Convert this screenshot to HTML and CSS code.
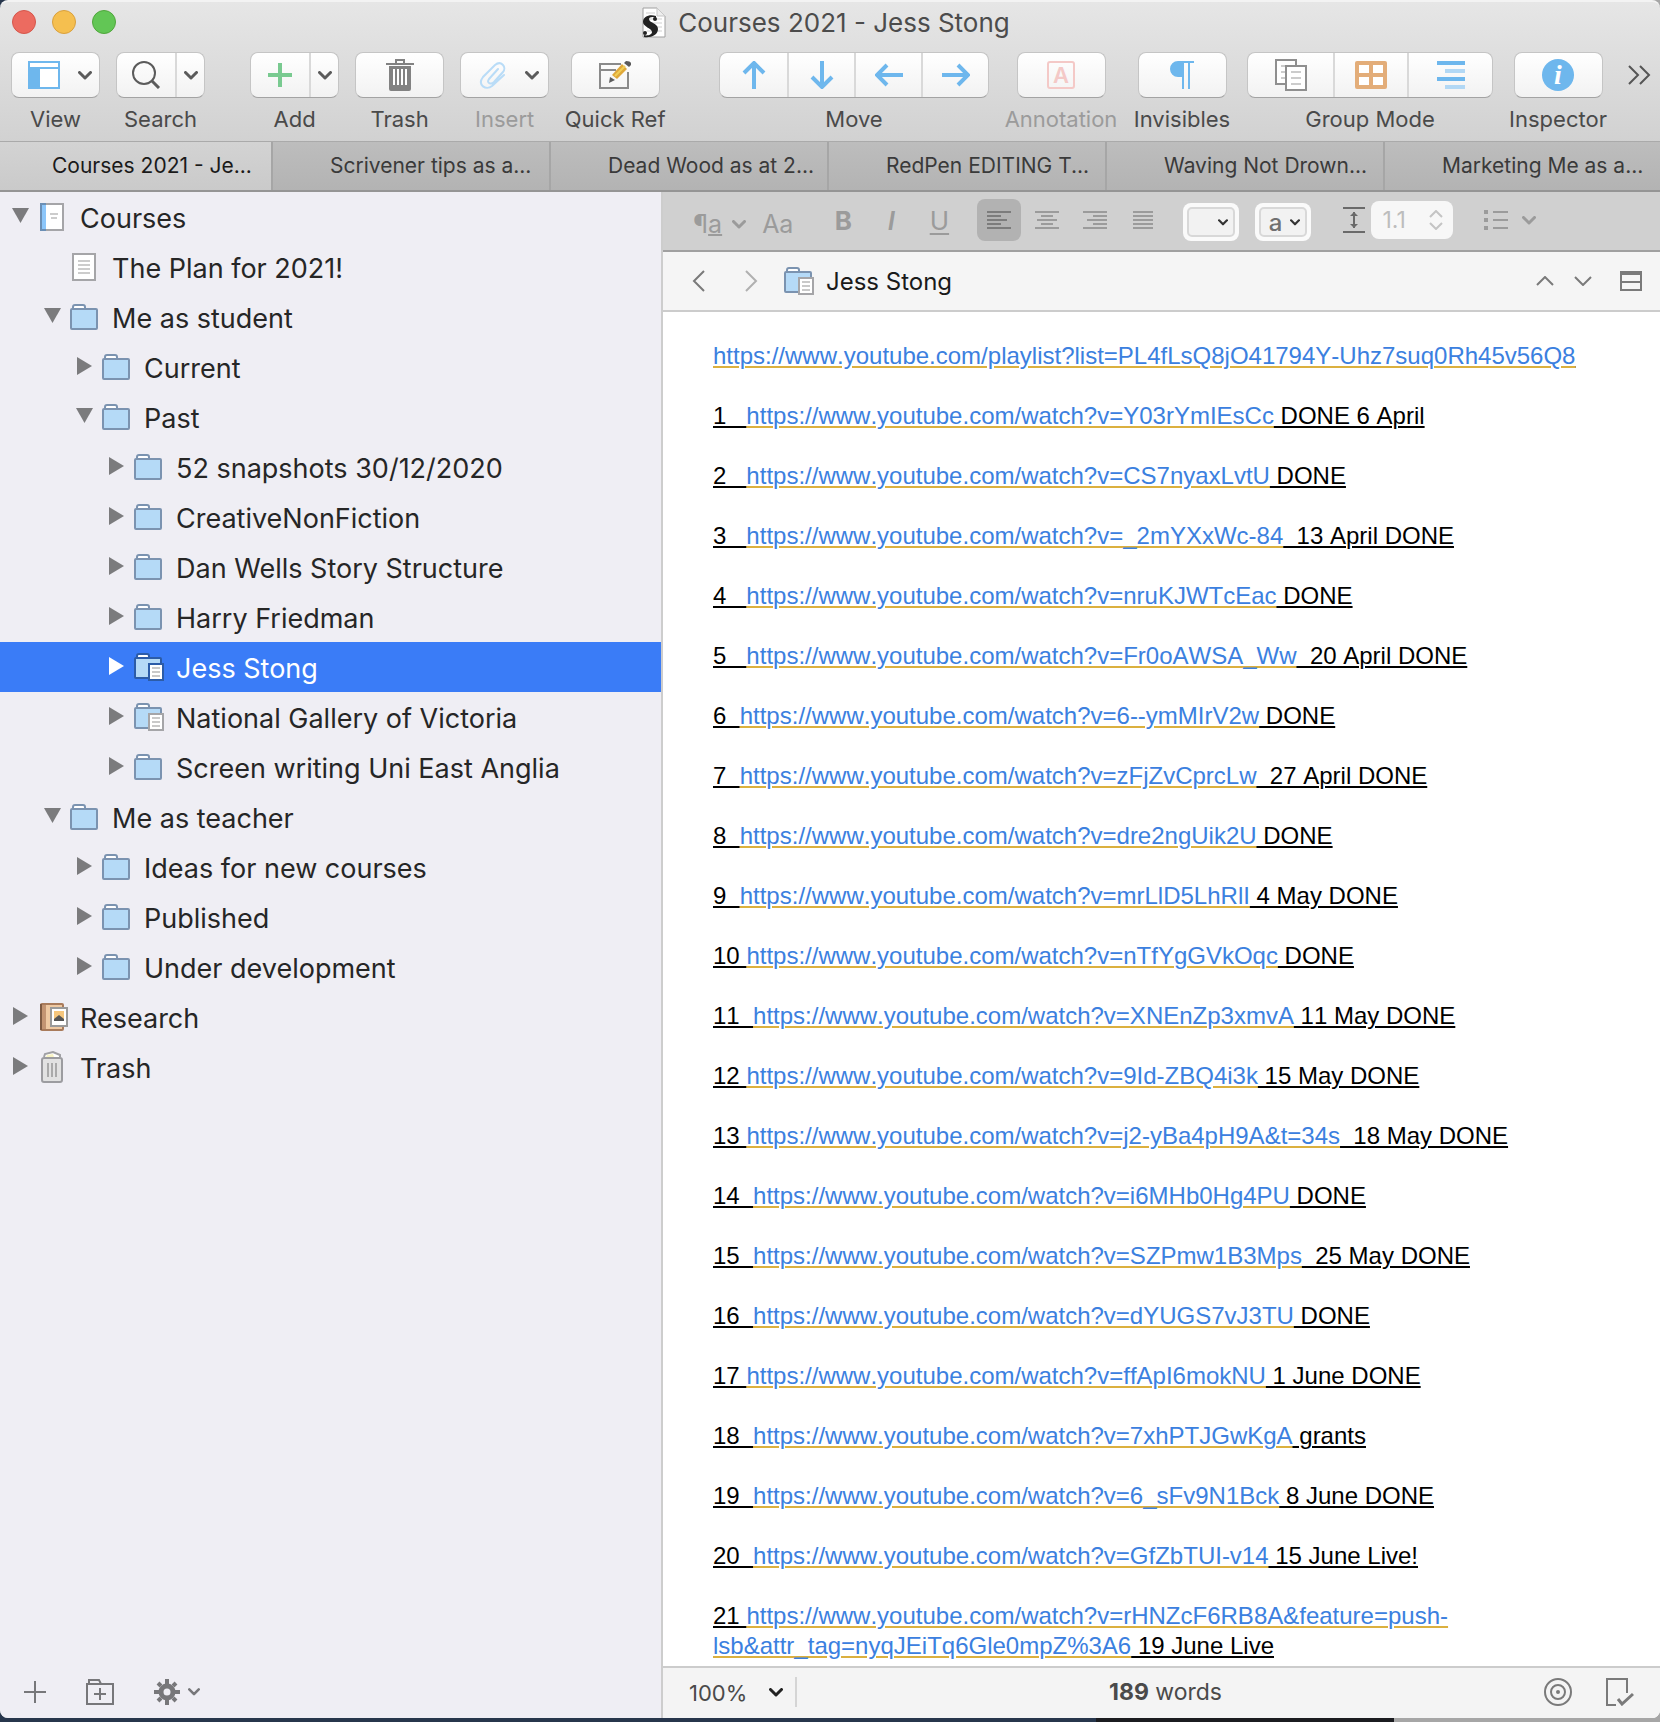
FILE: index.html
```html
<!DOCTYPE html>
<html lang="en">
<head>
  <meta charset="UTF-8" />
  <meta name="viewport" content="width=device-width, initial-scale=1.0" />
  <title>Courses 2021 - Jess Stong</title>
  <link rel="stylesheet" href="styles.css">
</head>
<body>

  <!-- shared icons -->
  <svg class="sprite" aria-hidden="true">
    <symbol id="chevron" viewBox="0 0 14 9"><path d="M1.5 1.5L7 7L12.5 1.5" fill="none" stroke="currentColor" stroke-width="3" stroke-linecap="round" stroke-linejoin="round"/></symbol>
    <symbol id="tri-down" viewBox="0 0 18 18"><path d="M0 1H17L8.500 16Z" fill="currentColor"/></symbol>
    <symbol id="tri-right" viewBox="0 0 18 18"><path d="M1 0V18L16 9Z" fill="currentColor"/></symbol>
    <symbol id="folder" viewBox="0 0 28 26">
      <path d="M3 5V3Q3 1 5 1H13Q15 1 15 3V5" fill="#fff" stroke="var(--folder-line)" stroke-width="2"/>
      <rect x="1" y="5" width="26" height="20" rx="1" fill="#b5daf7" stroke="var(--folder-line)" stroke-width="2"/>
    </symbol>
    <symbol id="folder-doc" viewBox="0 0 30 28">
      <path d="M3 5V3Q3 1 5 1H13Q15 1 15 3V5" fill="#fff" stroke="var(--folder-line)" stroke-width="2"/>
      <rect x="1" y="5" width="26" height="20" rx="1" fill="#b5daf7" stroke="var(--folder-line)" stroke-width="2"/>
      <rect x="15" y="11" width="14" height="16" fill="#fff" stroke="var(--doc-line)" stroke-width="2"/>
      <path d="M18 15H26M18 19H26M18 23H26" stroke="#c9c9c9" stroke-width="2"/>
    </symbol>
  </svg>

  <div class="window">
    <header class="titlebar">
      <div class="lights">
        <button class="light red" aria-label="Close"></button>
        <button class="light yellow" aria-label="Minimise"></button>
        <button class="light green" aria-label="Zoom"></button>
      </div>
      <h1>
        <svg width="24" height="31" viewBox="0 0 24 31">
          <path d="M1 1H15L23 9V30H1Z" fill="#fff" stroke="#a0a0a0" stroke-width="1"/>
          <path d="M15 1V9H23" fill="#eee" stroke="#c5c5c5"/>
          <path d="M4 6H13M5 12H20M5 16H20M5 20H20M5 24H20" stroke="#cfcfcf"/>
          <path d="M14 9C8 7 1 9 1 15C1 20 10 21 10 25C10 28 5 29 2 28V30C9 31 16 28 16 22C16 16 7 16 7 12C7 10 11 9 14 11Z" fill="#222"/>
          <circle cx="13" cy="12" r="2" fill="#222"/><circle cx="3" cy="26" r="2" fill="#222"/>
        </svg>
        Courses 2021 - Jess Stong
      </h1>
    </header>

    <div class="toolbar">
      <div class="tool">
        <div class="group">
          <button class="split" aria-label="View">
            <svg width="32" height="28"><path d="M0 0H32V28H0Z" fill="#6eb7ed"/><path d="M2 2H30V6H2ZM12 8H30V26H12Z" fill="#fff"/></svg>
            <svg class="chev"><use href="#chevron"/></svg>
          </button>
        </div>
        <span>View</span>
      </div>
      <div class="tool">
        <div class="group">
          <button class="seg-58" aria-label="Search"><svg width="30" height="28" fill="none" stroke="#5b5b5b"><circle cx="13" cy="12" r="11" stroke-width="2"/><path d="M21 20L28 27" stroke-width="3"/></svg></button>
          <button class="seg-29" aria-label="Search options"><svg class="chev"><use href="#chevron"/></svg></button>
        </div>
        <span>Search</span>
      </div>
      <div class="spacer"></div>
      <div class="tool">
        <div class="group">
          <button class="seg-58" aria-label="Add"><svg width="24" height="24"><path d="M12 0V24M0 12H24" stroke="#79ca90" stroke-width="4"/></svg></button>
          <button class="seg-29" aria-label="Add options"><svg class="chev"><use href="#chevron"/></svg></button>
        </div>
        <span>Add</span>
      </div>
      <div class="tool">
        <div class="group">
          <button class="seg-87" aria-label="Trash"><svg width="28" height="32"><path d="M10 5V1H18V5" fill="none" stroke="#828282" stroke-width="2"/><path d="M0 4H28V6H0ZM3 7H25V30Q25 32 23 32H5Q3 32 3 30Z" fill="#828282"/><path d="M8 10V26M12 10V26M16 10V26M20 10V26" stroke="#fff" stroke-width="2"/></svg></button>
        </div>
        <span>Trash</span>
      </div>
      <div class="tool disabled">
        <div class="group">
          <button class="split" aria-label="Insert">
            <svg width="28" height="28" viewBox="0 0 28 28" fill="none" stroke="#b9dcf7" stroke-width="2" stroke-linecap="round"><path d="M19 8L10 18C7 22 12 24 15 21L24 11C28 6 22 -1 16 4L4 16C-2 24 7 30 13 25L25 14"/></svg>
            <svg class="chev"><use href="#chevron"/></svg>
          </button>
        </div>
        <span>Insert</span>
      </div>
      <div class="tool wide-100">
        <div class="group">
          <button class="seg-87" aria-label="Quick Ref"><svg width="32" height="28" viewBox="0 0 32 28"><path d="M22 3H1V27H29V11M1 9H17" fill="none" stroke="#8a8a8a" stroke-width="2"/><path d="M11 16L10 22L16 19Z" fill="#5b5b5b"/><path d="M13 14L23 3L28 8L18 18Z" fill="#e0a83a"/><path d="M16 15L26 5" stroke="#f0ce55" stroke-width="2"/><path d="M25 2L27 0Q33 0 32 4L30 6Z" fill="#5b5b5b"/></svg></button>
        </div>
        <span>Quick Ref</span>
      </div>
      <div class="spacer double"></div>
      <div class="tool move">
        <div class="group">
          <button class="seg-67" aria-label="Move up"><svg width="28" height="28"><path d="M14 28V2M4 12L14 2L24 12"/></svg></button>
          <button class="seg-67" aria-label="Move down"><svg width="28" height="28"><path d="M14 0V26M4 16L14 26L24 16"/></svg></button>
          <button class="seg-67" aria-label="Move left"><svg width="28" height="28"><path d="M28 14H2M12 4L2 14L12 24"/></svg></button>
          <button class="seg-67" aria-label="Move right"><svg width="28" height="28"><path d="M0 14H26M16 4L26 14L16 24"/></svg></button>
        </div>
        <span>Move</span>
      </div>
      <div class="tool disabled wide-112">
        <div class="group">
          <button class="seg-87" aria-label="Annotation"><svg width="28" height="28"><rect x="1" y="1" width="26" height="26" rx="2" fill="none" stroke="#f4c9c7" stroke-width="2"/><text x="14" y="22" class="glyph-a">A</text></svg></button>
        </div>
        <span>Annotation</span>
      </div>
      <div class="tool wide-98">
        <div class="group">
          <button class="seg-87" aria-label="Invisibles"><svg width="24" height="28"><path d="M24 0H8A8 8 0 0 0 8 16H12V28H14V2H18V28H20V2H24Z" fill="#6eb7ed"/></svg></button>
        </div>
        <span>Invisibles</span>
      </div>
      <div class="tool">
        <div class="group">
          <button class="seg-85" aria-label="Scrivenings"><svg width="32" height="32" stroke-width="2"><path d="M1 1H21V25H1Z" fill="#fff" stroke="#8f8f8f"/><path d="M6 7H16M6 13H16M6 19H16" stroke="#ccc"/><path d="M11 7H31V31H11Z" fill="#fff" stroke="#8f8f8f"/><path d="M16 13H26M16 19H26M16 25H26" stroke="#ccc"/></svg></button>
          <button class="seg-74" aria-label="Corkboard"><svg width="32" height="28"><rect width="32" height="28" rx="2" fill="#e3ad79"/><path d="M4 4H14V12H4ZM18 4H28V12H18ZM4 16H14V24H4ZM18 16H28V24H18Z" fill="#fff"/></svg></button>
          <button class="seg-85" aria-label="Outliner"><svg width="28" height="28" stroke-width="4"><path d="M0 2H28M0 18H28" stroke="#6eb7ed"/><path d="M8 10H28M8 26H28" stroke="#b2d8f5"/></svg></button>
        </div>
        <span>Group Mode</span>
      </div>
      <div class="tool wide-98">
        <div class="group">
          <button class="seg-87" aria-label="Inspector"><svg width="32" height="32"><circle cx="16" cy="16" r="16" fill="#6eb7ed"/><text x="16" y="25" class="glyph-i">i</text></svg></button>
        </div>
        <span>Inspector</span>
      </div>
      <button class="more" aria-label="More tools"><svg width="24" height="20" fill="none" stroke="#555" stroke-width="2"><path d="M2 1L11 10L2 19M13 1L22 10L13 19"/></svg></button>
    </div>

    <nav class="tabs">
      <a href="#" class="active">Courses 2021 - Je...</a>
      <a href="#">Scrivener tips as a...</a>
      <a href="#">Dead Wood as at 2...</a>
      <a href="#">RedPen EDITING T...</a>
      <a href="#">Waving Not Drown...</a>
      <a href="#">Marketing Me as a...</a>
    </nav>

    <main>
      <aside class="binder">
        <ul>
          <li><button class="toggle" aria-label="Collapse"><svg><use href="#tri-down"/></svg></button>
            <span class="icon"><svg width="24" height="28"><path d="M1 1H23V27H1Z" fill="#fff" stroke="#a5a5a8" stroke-width="2"/><path d="M0 0H6V28H0Z" fill="#6b8fb5"/><path d="M2 2H6V26H2Z" fill="#8cc6fa"/><path d="M10 11H18M11 15H17" stroke="#ccc" stroke-width="2"/></svg></span><a href="#">Courses</a></li>
          <li class="level-1"><span class="toggle"></span>
            <span class="icon"><svg width="24" height="28"><path d="M1 1H23V27H1Z" fill="#fff" stroke="#a5a5a8" stroke-width="2"/><path d="M6 8H18M6 12H18M6 16H18M6 20H18" stroke="#ccc" stroke-width="2"/></svg></span><a href="#">The Plan for 2021!</a></li>
          <li class="level-1"><button class="toggle" aria-label="Collapse"><svg><use href="#tri-down"/></svg></button><span class="icon"><svg class="folder"><use href="#folder"/></svg></span><a href="#">Me as student</a></li>
          <li class="level-2"><button class="toggle" aria-label="Expand"><svg><use href="#tri-right"/></svg></button><span class="icon"><svg class="folder"><use href="#folder"/></svg></span><a href="#">Current</a></li>
          <li class="level-2"><button class="toggle" aria-label="Collapse"><svg><use href="#tri-down"/></svg></button><span class="icon"><svg class="folder"><use href="#folder"/></svg></span><a href="#">Past</a></li>
          <li class="level-3"><button class="toggle" aria-label="Expand"><svg><use href="#tri-right"/></svg></button><span class="icon"><svg class="folder"><use href="#folder"/></svg></span><a href="#">52 snapshots 30/12/2020</a></li>
          <li class="level-3"><button class="toggle" aria-label="Expand"><svg><use href="#tri-right"/></svg></button><span class="icon"><svg class="folder"><use href="#folder"/></svg></span><a href="#">CreativeNonFiction</a></li>
          <li class="level-3"><button class="toggle" aria-label="Expand"><svg><use href="#tri-right"/></svg></button><span class="icon"><svg class="folder"><use href="#folder"/></svg></span><a href="#">Dan Wells Story Structure</a></li>
          <li class="level-3"><button class="toggle" aria-label="Expand"><svg><use href="#tri-right"/></svg></button><span class="icon"><svg class="folder"><use href="#folder"/></svg></span><a href="#">Harry Friedman</a></li>
          <li class="level-3 selected"><button class="toggle" aria-label="Expand"><svg><use href="#tri-right"/></svg></button><span class="icon"><svg class="folder-doc"><use href="#folder-doc"/></svg></span><a href="#">Jess Stong</a></li>
          <li class="level-3"><button class="toggle" aria-label="Expand"><svg><use href="#tri-right"/></svg></button><span class="icon"><svg class="folder-doc"><use href="#folder-doc"/></svg></span><a href="#">National Gallery of Victoria</a></li>
          <li class="level-3"><button class="toggle" aria-label="Expand"><svg><use href="#tri-right"/></svg></button><span class="icon"><svg class="folder"><use href="#folder"/></svg></span><a href="#">Screen writing Uni East Anglia</a></li>
          <li class="level-1"><button class="toggle" aria-label="Collapse"><svg><use href="#tri-down"/></svg></button><span class="icon"><svg class="folder"><use href="#folder"/></svg></span><a href="#">Me as teacher</a></li>
          <li class="level-2"><button class="toggle" aria-label="Expand"><svg><use href="#tri-right"/></svg></button><span class="icon"><svg class="folder"><use href="#folder"/></svg></span><a href="#">Ideas for new courses</a></li>
          <li class="level-2"><button class="toggle" aria-label="Expand"><svg><use href="#tri-right"/></svg></button><span class="icon"><svg class="folder"><use href="#folder"/></svg></span><a href="#">Published</a></li>
          <li class="level-2"><button class="toggle" aria-label="Expand"><svg><use href="#tri-right"/></svg></button><span class="icon"><svg class="folder"><use href="#folder"/></svg></span><a href="#">Under development</a></li>
          <li><button class="toggle" aria-label="Expand"><svg><use href="#tri-right"/></svg></button>
            <span class="icon"><svg class="book" width="28" height="28" viewBox="0 0 28 28"><rect x="3" y="1" width="22" height="26" rx="1" fill="#efc9a2" stroke="#a97b5b" stroke-width="2"/><path d="M4 2H8V26H4Z" fill="#c39472"/><path d="M3 1V27" stroke="#7e5a42" stroke-width="2"/><path d="M13 5H29V23H13Z" fill="#fff" stroke="#9a9a9a" stroke-width="2"/><path d="M16 8H26V18H16Z" fill="#f6c67c"/><path d="M16 18V16L21 12L26 16V18Z" fill="#555"/></svg></span><a href="#">Research</a></li>
          <li><button class="toggle" aria-label="Expand"><svg><use href="#tri-right"/></svg></button>
            <span class="icon"><svg width="22" height="32"><path d="M3 6L4 3L12 1L19 4V6" fill="#fff" stroke="#a0a0a4" stroke-width="2"/><path d="M5 6L6 4L12 3L13 6Z" fill="#f8f3c4"/><rect x="1" y="7" width="20" height="24" rx="2" fill="#e2e2e2" stroke="#9c9ca0" stroke-width="2"/><path d="M7 12V26M11 12V26M15 12V26" stroke="#aaa" stroke-width="2"/></svg></span><a href="#">Trash</a></li>
        </ul>
        <div class="binder-footer">
          <button aria-label="Add item"><svg width="22" height="22"><path d="M11 0V22M0 11H22" stroke="currentColor" stroke-width="2"/></svg></button>
          <button aria-label="Add folder"><svg width="28" height="26" fill="none" stroke="currentColor" stroke-width="2"><path d="M1 5H27V25H1ZM3 5V1H13L15 5M14 9V21M8 15H20"/></svg></button>
          <button class="gear" aria-label="Actions">
            <svg width="26" height="26" viewBox="-13 -13 26 26"><circle r="6" fill="none" stroke="currentColor" stroke-width="5"/><path d="M0 -13V-8M0 8V13M-13 0H-8M8 0H13M-9 -9L-6 -6M6 6L9 9M-9 9L-6 6M6 -6L9 -9" stroke="currentColor" stroke-width="4"/></svg>
            <svg width="12" height="8"><use href="#chevron"/></svg>
          </button>
        </div>
      </aside>

      <section class="editor">
        <div class="format-bar">
          <div class="styles">
            <button aria-label="Paragraph style"><span class="pilcrow">¶<u>a</u></span><svg class="chev"><use href="#chevron"/></svg></button>
            <button class="font">Aa</button>
          </div>
          <div class="cells">
            <button class="bold">B</button>
            <button class="italic">I</button>
            <button class="underline">U</button>
          </div>
          <div class="cells">
            <button class="on" aria-label="Align left"><svg width="24" height="18"><path d="M0 1H24M0 5H14M0 9H20M0 13H14M0 17H24"/></svg></button>
            <button aria-label="Align centre"><svg width="24" height="18"><path d="M0 1H24M6 5H18M2 9H22M6 13H18M0 17H24"/></svg></button>
            <button aria-label="Align right"><svg width="24" height="18"><path d="M0 1H24M10 5H24M4 9H24M10 13H24M0 17H24"/></svg></button>
            <button aria-label="Justify"><svg width="20" height="18"><path d="M0 1H20M0 5H20M0 9H20M0 13H20M0 17H20"/></svg></button>
          </div>
          <div class="colours">
            <button aria-label="Text colour"><span><svg width="10" height="7"><use href="#chevron"/></svg></span></button>
            <button aria-label="Highlight colour"><span>a<svg width="10" height="7"><use href="#chevron"/></svg></span></button>
          </div>
          <label class="spacing">
            <svg width="22" height="26" stroke="#6a6a6a" stroke-width="2"><path d="M0 1H22M0 25H22M11 5V21"/><path d="M7 9L11 5L15 9ZM7 17L11 21L15 17Z" fill="#6a6a6a" stroke="none"/></svg>
            <span class="number"><input type="text" value="1.1" aria-label="Line spacing" disabled><svg width="14" height="20" fill="none" stroke="#c4c4c4" stroke-width="2"><path d="M1 7L7 1L13 7M1 13L7 19L13 13"/></svg></span>
          </label>
          <button class="list" aria-label="Lists"><svg width="24" height="20"><path d="M0 2H4M0 10H4M0 18H4" stroke-width="4"/><path d="M9 2H24M9 10H24M9 18H24"/></svg><svg class="chev"><use href="#chevron"/></svg></button>
        </div>

        <div class="doc-header">
          <button aria-label="Back"><svg width="14" height="22"><path d="M12 1L2 11L12 21"/></svg></button>
          <button class="faded" aria-label="Forward"><svg width="14" height="22"><path d="M2 1L12 11L2 21"/></svg></button>
          <svg class="folder-doc"><use href="#folder-doc"/></svg>
          <h2>Jess Stong</h2>
          <button aria-label="Previous document"><svg width="18" height="10"><path d="M1 9L9 1L17 9"/></svg></button>
          <button aria-label="Next document"><svg width="18" height="10"><path d="M1 1L9 9L17 1"/></svg></button>
          <button class="split-view" aria-label="Split"><svg width="22" height="20"><path d="M1 1H21V19H1ZM1 3H21M1 11H21"/></svg></button>
        </div>

        <article>
          <p><a href="#">https://www.youtube.com/playlist?list=PL4fLsQ8jO41794Y-Uhz7suq0Rh45v56Q8</a></p>
          <p>1   <a href="#">https://www.youtube.com/watch?v=Y03rYmIEsCc</a> DONE 6 April</p>
          <p>2   <a href="#">https://www.youtube.com/watch?v=CS7nyaxLvtU</a> DONE</p>
          <p>3   <a href="#">https://www.youtube.com/watch?v=_2mYXxWc-84</a>  13 April DONE</p>
          <p>4   <a href="#">https://www.youtube.com/watch?v=nruKJWTcEac</a> DONE</p>
          <p>5   <a href="#">https://www.youtube.com/watch?v=Fr0oAWSA_Ww</a>  20 April DONE</p>
          <p>6  <a href="#">https://www.youtube.com/watch?v=6--ymMIrV2w</a> DONE</p>
          <p>7  <a href="#">https://www.youtube.com/watch?v=zFjZvCprcLw</a>  27 April DONE</p>
          <p>8  <a href="#">https://www.youtube.com/watch?v=dre2ngUik2U</a> DONE</p>
          <p>9  <a href="#">https://www.youtube.com/watch?v=mrLlD5LhRlI</a> 4 May DONE</p>
          <p>10 <a href="#">https://www.youtube.com/watch?v=nTfYgGVkOqc</a> DONE</p>
          <p>11  <a href="#">https://www.youtube.com/watch?v=XNEnZp3xmvA</a> 11 May DONE</p>
          <p>12 <a href="#">https://www.youtube.com/watch?v=9Id-ZBQ4i3k</a> 15 May DONE</p>
          <p>13 <a href="#">https://www.youtube.com/watch?v=j2-yBa4pH9A&amp;t=34s</a>  18 May DONE</p>
          <p>14  <a href="#">https://www.youtube.com/watch?v=i6MHb0Hg4PU</a> DONE</p>
          <p>15  <a href="#">https://www.youtube.com/watch?v=SZPmw1B3Mps</a>  25 May DONE</p>
          <p>16  <a href="#">https://www.youtube.com/watch?v=dYUGS7vJ3TU</a> DONE</p>
          <p>17 <a href="#">https://www.youtube.com/watch?v=ffApI6mokNU</a> 1 June DONE</p>
          <p>18  <a href="#">https://www.youtube.com/watch?v=7xhPTJGwKgA</a> grants</p>
          <p>19  <a href="#">https://www.youtube.com/watch?v=6_sFv9N1Bck</a> 8 June DONE</p>
          <p>20  <a href="#">https://www.youtube.com/watch?v=GfZbTUI-v14</a> 15 June Live!</p>
          <p>21 <a href="#">https://www.youtube.com/watch?v=rHNZcF6RB8A&amp;feature=push-lsb&amp;attr_tag=nyqJEiTq6Gle0mpZ%3A6</a> 19 June Live</p>
        </article>

        <footer>
          <div class="zoom">
            <select aria-label="Zoom"><option>100%</option></select>
            <svg class="chev"><use href="#chevron"/></svg>
          </div>
          <p><b>189</b> words</p>
          <div class="footer-icons">
            <button aria-label="Targets"><svg width="28" height="28" fill="none" stroke="currentColor" stroke-width="2"><circle cx="14" cy="14" r="13"/><circle cx="14" cy="14" r="7"/><circle cx="14" cy="14" r="1"/></svg></button>
            <button aria-label="Compile status"><svg width="28" height="28" fill="none" stroke="currentColor"><path d="M10 27H1V1H21V15" stroke-width="2"/><path d="M12 21L16 26L27 16" stroke-width="3"/></svg></button>
          </div>
        </footer>
      </section>
    </main>
  </div>

</body>
</html>
```

FILE: styles.css
```css
:root {
  --ui: Inter, "Liberation Sans", sans-serif;
  --folder-line: #7b93b0;
  --doc-line: #a5a5a8;
  --blue: #6eb7ed;
  --select: #3a7cf7;
}

* {
  box-sizing: border-box;
  margin: 0;
  padding: 0;
}

body {
  font-family: var(--ui);
  min-height: 100vh;
  display: flex;
  padding-bottom: 4px;
  background: linear-gradient(to right, #27364c 66%, #1b1c20 66%, #1b1c20 84%, #a6a6a6 84%);
}

button {
  border: none;
  background: none;
  font-family: inherit;
  color: inherit;
  display: flex;
  align-items: center;
  justify-content: center;
}

a {
  color: inherit;
  text-decoration: none;
}

svg {
  display: block;
  flex-shrink: 0;
}

.sprite {
  position: absolute;
  width: 0;
  height: 0;
}

.chev {
  width: 14px;
  height: 9px;
}

.folder {
  width: 28px;
  height: 26px;
}

.folder-doc {
  width: 30px;
  height: 28px;
}

.window {
  flex: 1;
  min-width: 0;
  display: flex;
  flex-direction: column;
  border-radius: 8px;
  overflow: hidden;
  background: linear-gradient(#e6e6e6, #d1d1d1 141px);
  border-top: 2px solid #f3f3f3;
}

/* Title bar */
.titlebar {
  height: 44px;
  display: grid;
  grid-template-columns: 1fr auto 1fr;
  align-items: center;
  padding: 0 20px 4px 12px;
}

.lights {
  display: flex;
  gap: 16px;
}

.light {
  width: 24px;
  height: 24px;
  border-radius: 50%;
}

.red {
  background: #ec6b60;
  border: 1px solid #d5564b;
}

.yellow {
  background: #f5bf4f;
  border: 1px solid #d9a03d;
}

.green {
  background: #62c655;
  border: 1px solid #50a63c;
}

.titlebar h1 {
  display: flex;
  align-items: center;
  gap: 12px;
  font-size: 26px;
  font-weight: 400;
  color: #4c4c4c;
}

/* Toolbar */
.toolbar {
  display: flex;
  align-items: flex-start;
  gap: 16px;
  padding: 6px 9px 0 11px;
  height: 95px;
}

.tool {
  display: flex;
  flex-direction: column;
  align-items: center;
  flex-shrink: 0;
  gap: 7px;
  font-size: 22px;
  line-height: 28px;
  color: #4a4a4a;
  white-space: nowrap;
}

.tool.disabled span {
  color: #9b9b9b;
}

.wide-98 {
  width: 98px;
}

.wide-100 {
  width: 100px;
}

.wide-112 {
  width: 112px;
}

.spacer {
  flex: 3;
}

.spacer.double {
  flex: 5;
}

.group {
  display: flex;
  height: 46px;
  border: 1px solid #c5c5c5;
  border-bottom-color: #a3a3a3;
  border-radius: 8px;
  background: linear-gradient(#fff, #f2f2f2);
  color: #5b5b5b;
}

.group button + button {
  border-left: 2px solid #d9d9d9;
}

.split {
  width: 87px;
  gap: 18px;
  padding-left: 8px;
}

.seg-29 {
  width: 29px;
}

.seg-58 {
  width: 58px;
}

.seg-67 {
  width: 67px;
}

.seg-74 {
  width: 74px;
}

.seg-85 {
  width: 85px;
}

.seg-87 {
  width: 87px;
}

.move svg {
  fill: none;
  stroke: var(--blue);
  stroke-width: 4;
}

.glyph-a {
  font-size: 22px;
  font-weight: 600;
  fill: #f4c9c7;
  text-anchor: middle;
}

.glyph-i {
  font: italic bold 28px "Liberation Serif", serif;
  fill: #fff;
  text-anchor: middle;
}

.more {
  height: 46px;
  padding-left: 4px;
}

/* Tabs */
.tabs {
  display: grid;
  grid-template-columns: repeat(6, 1fr);
  height: 51px;
  margin: 0 -3px 0 -5px;
  border-top: 1px solid #aaa;
  border-bottom: 2px solid #959595;
}

.tabs a {
  padding-left: 57px;
  border-right: 2px solid #a6a6a6;
  background: linear-gradient(#bdbdbd, #b3b3b3);
  color: #3a3a3a;
  font-size: 21px;
  line-height: 48px;
  white-space: nowrap;
  overflow: hidden;
}

.tabs a.active {
  background: linear-gradient(#d3d3d3, #cacaca);
  color: #1a1a1a;
}

main {
  flex: 1;
  display: grid;
  grid-template-columns: 663px 1fr;
}

/* Binder */
.binder {
  display: flex;
  flex-direction: column;
  justify-content: space-between;
  background: #efeef4;
  border-right: 2px solid #cdcdcd;
}

.binder ul {
  list-style: none;
}

.binder li {
  display: flex;
  align-items: center;
  height: 50px;
  padding-left: 12px;
  font-size: 27px;
  color: #262626;
}

.binder .level-1 {
  padding-left: 44px;
}

.binder .level-2 {
  padding-left: 76px;
}

.binder .level-3 {
  padding-left: 108px;
}

.binder .selected {
  --folder-line: #2c5ca8;
  --doc-line: #2c5ca8;
  background: var(--select);
  color: #fff;
}

.toggle {
  width: 18px;
  padding-bottom: 2px;
  color: #7b7b7d;
}

.selected .toggle {
  color: #fff;
}

.toggle svg {
  width: 18px;
  height: 18px;
}

.icon {
  width: 28px;
  margin: 0 14px 0 8px;
  display: flex;
  justify-content: center;
}

.icon .book {
  overflow: visible;
}

.binder li a {
  line-height: 48px;
  padding-top: 3px;
}

.icon .folder-doc {
  margin-right: -2px;
}

.binder-footer {
  display: flex;
  align-items: center;
  gap: 40px;
  height: 52px;
  padding-left: 24px;
  color: #77777a;
}

.gear {
  gap: 8px;
}

/* Editor */
.editor {
  display: flex;
  flex-direction: column;
  min-width: 0;
  background: #fff;
}

.format-bar {
  display: flex;
  align-items: center;
  height: 60px;
  padding: 0 0 2px 30px;
  background: #d0d0d0;
  border-bottom: 2px solid #a0a0a0;
  color: #9b9b9b;
}

.styles {
  display: flex;
  align-items: center;
  gap: 16px;
  padding-top: 8px;
  margin-right: 28px;
}

.styles button {
  gap: 10px;
  font-size: 25px;
}

.pilcrow u {
  text-decoration-thickness: 2px;
}

.cells {
  display: flex;
  gap: 4px;
  margin-right: 16px;
}

.cells button {
  width: 44px;
  height: 42px;
  border-radius: 8px;
  font-size: 26px;
}

.cells .on {
  background: #b2b2b2;
  color: #7c7c7c;
}

.cells svg,
.list svg {
  stroke: currentColor;
  stroke-width: 2;
}

.cells .bold {
  font-weight: 700;
}

.cells .italic {
  font-style: italic;
  font-weight: 600;
}

.cells .underline {
  text-decoration: underline 2px;
  text-underline-offset: 3px;
}

.colours {
  display: flex;
  gap: 16px;
  padding-top: 4px;
  margin-left: 2px;
}

.colours button {
  width: 56px;
  height: 38px;
  padding: 4px;
  border-radius: 8px;
  background: #fafafa;
}

.colours span {
  display: flex;
  align-items: center;
  justify-content: flex-end;
  gap: 8px;
  width: 48px;
  height: 30px;
  padding-right: 5px;
  border: 2px solid #d8d8d8;
  border-radius: 5px;
  background: #f2f2f2;
  font-size: 24px;
  font-weight: 500;
  color: #707070;
}

.colours svg {
  color: #333;
}

.spacing {
  display: flex;
  align-items: center;
  gap: 6px;
  margin: 0 31px 0 32px;
}

.number {
  display: flex;
  align-items: center;
  width: 82px;
  height: 38px;
  padding: 0 10px 0 11px;
  border-radius: 8px;
  background: #f7f7f7;
}

.number input {
  flex: 1;
  width: 20px;
  border: none;
  background: none;
  font: 23px var(--ui);
  color: #bdbdbd;
}

.list {
  gap: 14px;
}

.doc-header {
  display: flex;
  align-items: center;
  gap: 20px;
  height: 60px;
  padding: 0 18px 0 29px;
  background: #f5f5f5;
  border-bottom: 2px solid #ccc;
  color: #7a7a7a;
}

.doc-header button svg {
  fill: none;
  stroke: currentColor;
  stroke-width: 2;
}

.doc-header button:first-child {
  margin-right: 18px;
}

.doc-header .faded {
  margin-right: 6px;
  color: #b0b0b0;
}

.doc-header h2 {
  flex: 1;
  margin-left: -8px;
  font-size: 24px;
  font-weight: 400;
  color: #1a1a1a;
}

.doc-header .split-view {
  margin-left: 8px;
}

article {
  flex: 1;
  padding: 29px 50px 5px;
  font: 24px/30px "Liberation Sans", Arial, sans-serif;
  font-kerning: none;
  color: #000;
}

article p {
  white-space: pre-wrap;
  text-decoration: underline 2px;
  text-underline-offset: 2px;
}

article p + p {
  margin-top: 30px;
}

article a {
  color: #3b80df;
  text-decoration: underline 2px #dbb03f;
  text-underline-offset: 2px;
}

footer {
  display: grid;
  grid-template-columns: 1fr auto 1fr;
  align-items: center;
  height: 52px;
  padding: 0 26px 2px;
  border-top: 2px solid #ccc;
  background: #f4f4f4;
  font-size: 23px;
  color: #4a4a4a;
}

footer p {
  padding-left: 8px;
}

.zoom {
  display: flex;
  align-items: center;
  justify-self: start;
  height: 30px;
  padding-right: 12px;
  border-right: 2px solid #d5d5d5;
}

.zoom select {
  appearance: none;
  border: none;
  background: none;
  width: 80px;
  padding-top: 2px;
  font: 22px var(--ui);
  color: inherit;
}

.zoom svg {
  color: #222;
}

.footer-icons {
  display: flex;
  justify-content: flex-end;
  gap: 34px;
  color: #7a7a7a;
}
```
